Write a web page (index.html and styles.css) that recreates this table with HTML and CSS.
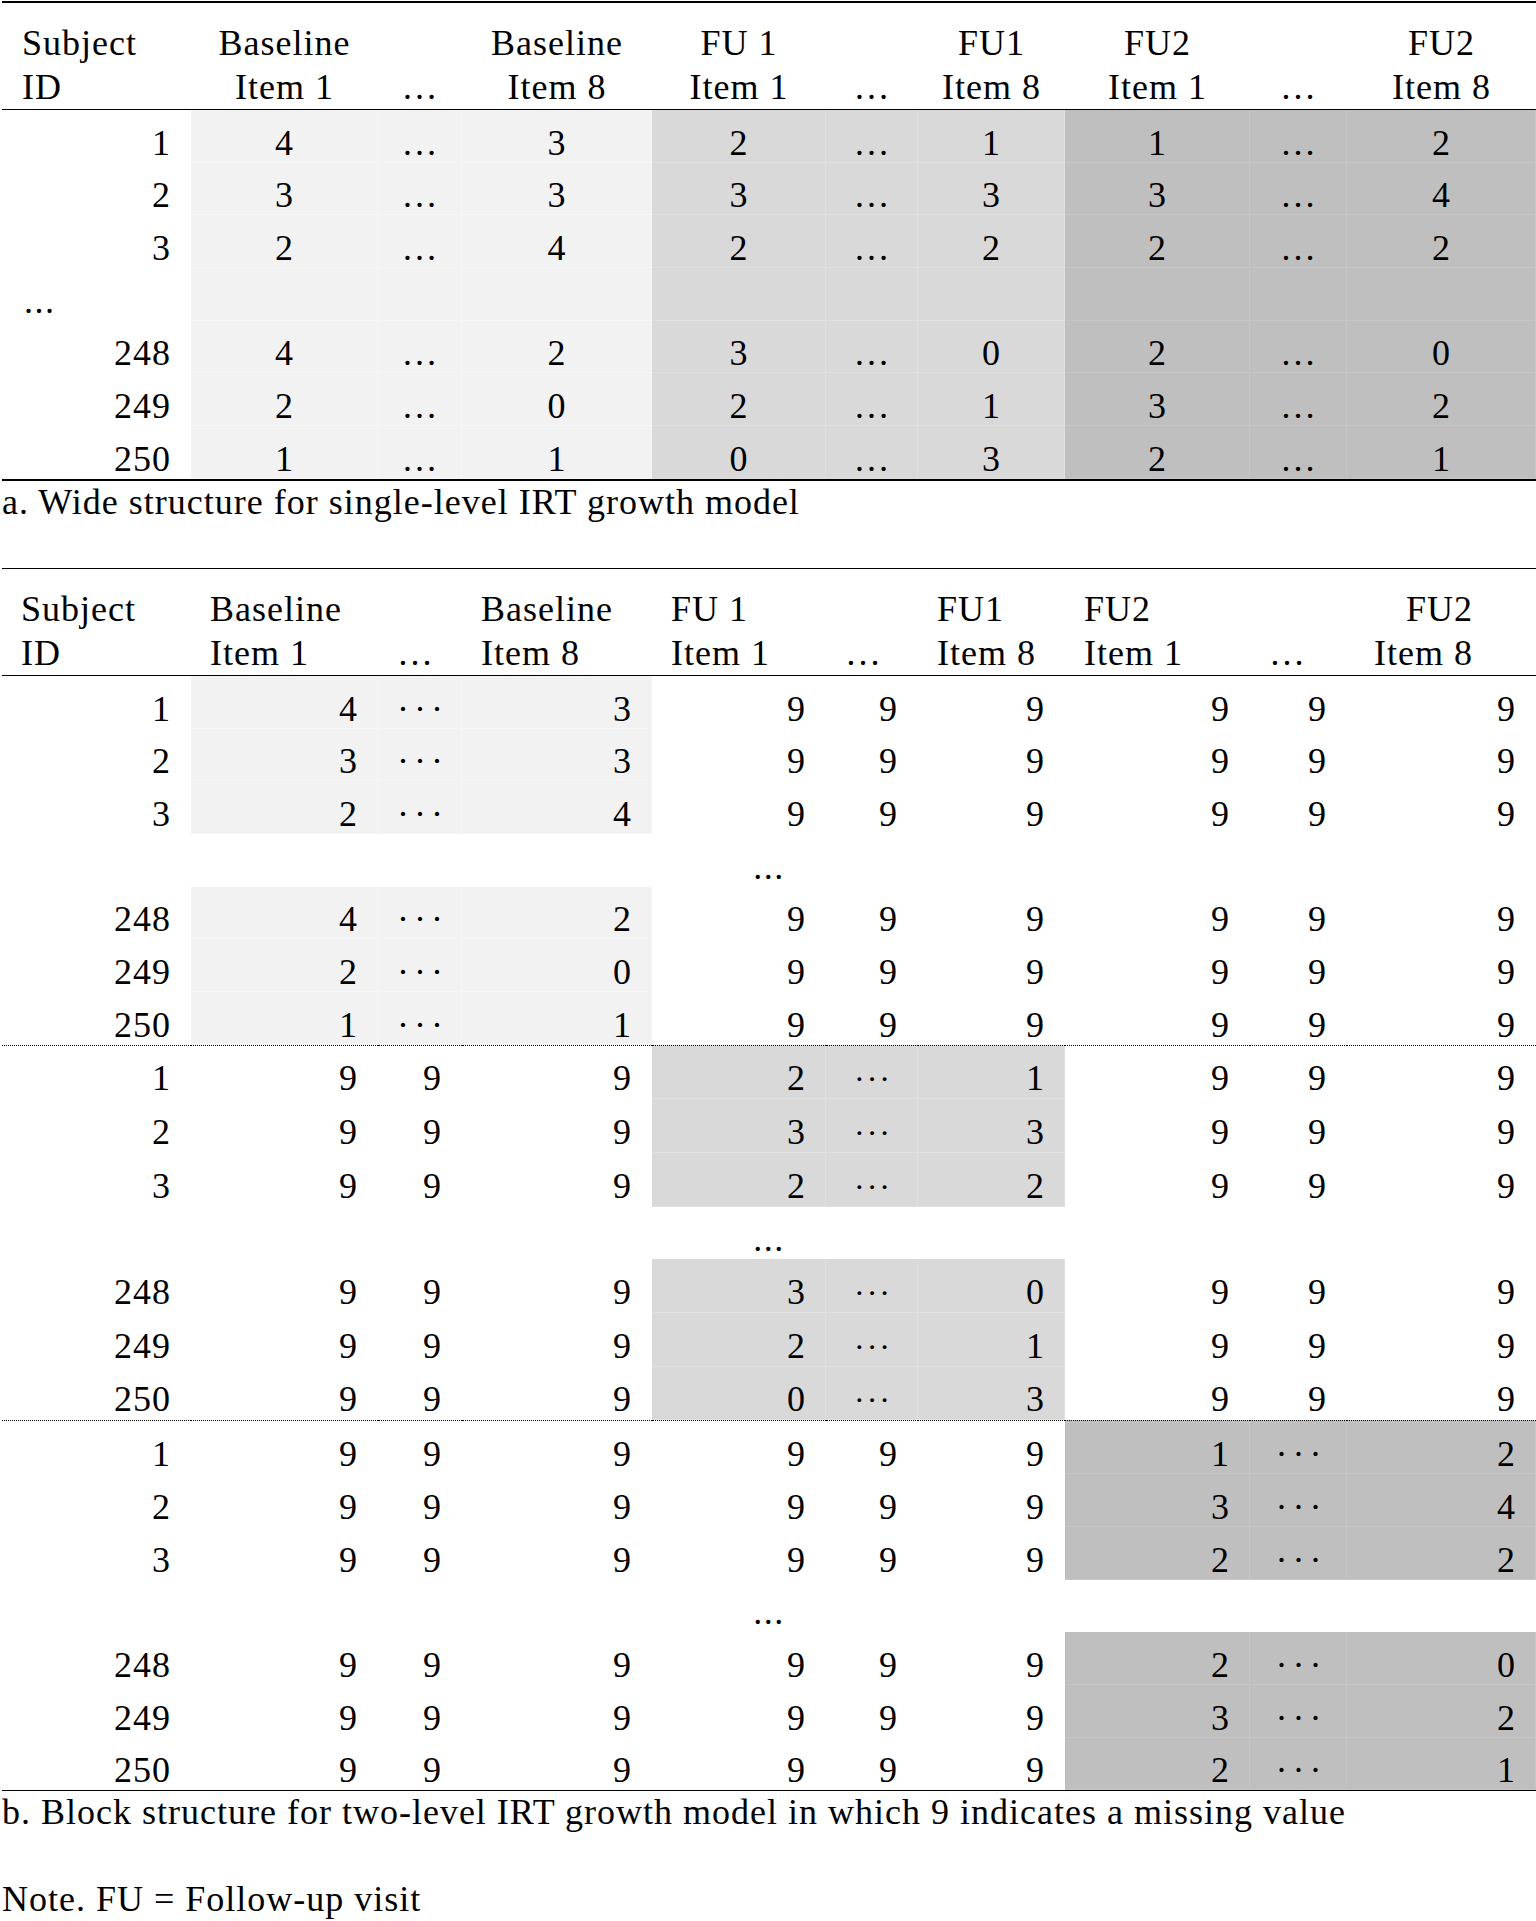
FILE: index.html
```html
<!DOCTYPE html>
<html lang="en">
<head>
<meta charset="utf-8">
<title>Wide and block data structures</title>
<link rel="stylesheet" href="styles.css">
</head>
<body>
<main class="page">
  <table class="grid wide">
    <colgroup>
      <col class="c1"><col class="c2"><col class="c3"><col class="c4"><col class="c5">
      <col class="c6"><col class="c7"><col class="c8"><col class="c9"><col class="c10">
    </colgroup>
    <thead>
      <tr>
        <th class="left">Subject<br>ID</th>
        <th>Baseline<br>Item 1</th>
        <th>…</th>
        <th>Baseline<br>Item 8</th>
        <th>FU 1<br>Item 1</th>
        <th>…</th>
        <th>FU1<br>Item 8</th>
        <th>FU2<br>Item 1</th>
        <th>…</th>
        <th>FU2<br>Item 8</th>
      </tr>
    </thead>
    <tbody>
      <tr><td class="id">1</td><td class="s1">4</td><td class="s1">…</td><td class="s1">3</td><td class="s2">2</td><td class="s2">…</td><td class="s2">1</td><td class="s3">1</td><td class="s3">…</td><td class="s3">2</td></tr>
      <tr><td class="id">2</td><td class="s1">3</td><td class="s1">…</td><td class="s1">3</td><td class="s2">3</td><td class="s2">…</td><td class="s2">3</td><td class="s3">3</td><td class="s3">…</td><td class="s3">4</td></tr>
      <tr><td class="id">3</td><td class="s1">2</td><td class="s1">…</td><td class="s1">4</td><td class="s2">2</td><td class="s2">…</td><td class="s2">2</td><td class="s3">2</td><td class="s3">…</td><td class="s3">2</td></tr>
      <tr><td class="skip">...</td><td class="s1"></td><td class="s1"></td><td class="s1"></td><td class="s2"></td><td class="s2"></td><td class="s2"></td><td class="s3"></td><td class="s3"></td><td class="s3"></td></tr>
      <tr><td class="id">248</td><td class="s1">4</td><td class="s1">…</td><td class="s1">2</td><td class="s2">3</td><td class="s2">…</td><td class="s2">0</td><td class="s3">2</td><td class="s3">…</td><td class="s3">0</td></tr>
      <tr><td class="id">249</td><td class="s1">2</td><td class="s1">…</td><td class="s1">0</td><td class="s2">2</td><td class="s2">…</td><td class="s2">1</td><td class="s3">3</td><td class="s3">…</td><td class="s3">2</td></tr>
      <tr class="last"><td class="id">250</td><td class="s1">1</td><td class="s1">…</td><td class="s1">1</td><td class="s2">0</td><td class="s2">…</td><td class="s2">3</td><td class="s3">2</td><td class="s3">…</td><td class="s3">1</td></tr>
    </tbody>
  </table>
  <p class="caption first">a. Wide structure for single-level IRT growth model</p>

  <table class="grid block">
    <colgroup>
      <col class="c1"><col class="c2"><col class="c3"><col class="c4"><col class="c5">
      <col class="c6"><col class="c7"><col class="c8"><col class="c9"><col class="c10">
    </colgroup>
    <thead>
      <tr>
        <th>Subject<br>ID</th>
        <th>Baseline<br>Item 1</th>
        <th>…</th>
        <th>Baseline<br>Item 8</th>
        <th>FU 1<br>Item 1</th>
        <th>…</th>
        <th>FU1<br>Item 8</th>
        <th>FU2<br>Item 1</th>
        <th>…</th>
        <th class="end">FU2<br>Item 8</th>
      </tr>
    </thead>
    <tbody>
      <tr><td>1</td><td class="s1">4</td><td class="s1 mid"><span class="md">···</span></td><td class="s1">3</td><td>9</td><td>9</td><td>9</td><td>9</td><td>9</td><td>9</td></tr>
      <tr><td>2</td><td class="s1">3</td><td class="s1 mid"><span class="md">···</span></td><td class="s1">3</td><td>9</td><td>9</td><td>9</td><td>9</td><td>9</td><td>9</td></tr>
      <tr><td>3</td><td class="s1">2</td><td class="s1 mid"><span class="md">···</span></td><td class="s1">4</td><td>9</td><td>9</td><td>9</td><td>9</td><td>9</td><td>9</td></tr>
      <tr><td colspan="10" class="gap">...</td></tr>
      <tr><td>248</td><td class="s1">4</td><td class="s1 mid"><span class="md">···</span></td><td class="s1">2</td><td>9</td><td>9</td><td>9</td><td>9</td><td>9</td><td>9</td></tr>
      <tr><td>249</td><td class="s1">2</td><td class="s1 mid"><span class="md">···</span></td><td class="s1">0</td><td>9</td><td>9</td><td>9</td><td>9</td><td>9</td><td>9</td></tr>
      <tr><td>250</td><td class="s1">1</td><td class="s1 mid"><span class="md">···</span></td><td class="s1">1</td><td>9</td><td>9</td><td>9</td><td>9</td><td>9</td><td>9</td></tr>

      <tr class="split"><td>1</td><td>9</td><td>9</td><td>9</td><td class="s2">2</td><td class="s2 mid"><span class="md sm">···</span></td><td class="s2">1</td><td>9</td><td>9</td><td>9</td></tr>
      <tr><td>2</td><td>9</td><td>9</td><td>9</td><td class="s2">3</td><td class="s2 mid"><span class="md sm">···</span></td><td class="s2">3</td><td>9</td><td>9</td><td>9</td></tr>
      <tr><td>3</td><td>9</td><td>9</td><td>9</td><td class="s2">2</td><td class="s2 mid"><span class="md sm">···</span></td><td class="s2">2</td><td>9</td><td>9</td><td>9</td></tr>
      <tr><td colspan="10" class="gap">...</td></tr>
      <tr><td>248</td><td>9</td><td>9</td><td>9</td><td class="s2">3</td><td class="s2 mid"><span class="md sm">···</span></td><td class="s2">0</td><td>9</td><td>9</td><td>9</td></tr>
      <tr><td>249</td><td>9</td><td>9</td><td>9</td><td class="s2">2</td><td class="s2 mid"><span class="md sm">···</span></td><td class="s2">1</td><td>9</td><td>9</td><td>9</td></tr>
      <tr><td>250</td><td>9</td><td>9</td><td>9</td><td class="s2">0</td><td class="s2 mid"><span class="md sm">···</span></td><td class="s2">3</td><td>9</td><td>9</td><td>9</td></tr>

      <tr class="split"><td>1</td><td>9</td><td>9</td><td>9</td><td>9</td><td>9</td><td>9</td><td class="s3">1</td><td class="s3 mid"><span class="md">···</span></td><td class="s3">2</td></tr>
      <tr><td>2</td><td>9</td><td>9</td><td>9</td><td>9</td><td>9</td><td>9</td><td class="s3">3</td><td class="s3 mid"><span class="md">···</span></td><td class="s3">4</td></tr>
      <tr><td>3</td><td>9</td><td>9</td><td>9</td><td>9</td><td>9</td><td>9</td><td class="s3">2</td><td class="s3 mid"><span class="md">···</span></td><td class="s3">2</td></tr>
      <tr><td colspan="10" class="gap">...</td></tr>
      <tr><td>248</td><td>9</td><td>9</td><td>9</td><td>9</td><td>9</td><td>9</td><td class="s3">2</td><td class="s3 mid"><span class="md">···</span></td><td class="s3">0</td></tr>
      <tr><td>249</td><td>9</td><td>9</td><td>9</td><td>9</td><td>9</td><td>9</td><td class="s3">3</td><td class="s3 mid"><span class="md">···</span></td><td class="s3">2</td></tr>
      <tr class="last"><td>250</td><td>9</td><td>9</td><td>9</td><td>9</td><td>9</td><td>9</td><td class="s3">2</td><td class="s3 mid"><span class="md">···</span></td><td class="s3">1</td></tr>
    </tbody>
  </table>
  <p class="caption">b. Block structure for two-level IRT growth model in which 9 indicates a missing value</p>
  <p class="caption note">Note. FU = Follow-up visit</p>
</main>
</body>
</html>
```

FILE: styles.css
```css
html, body {
  margin: 0;
  padding: 0;
  background: #ffffff;
}

body {
  font-family: "Liberation Serif", "Times New Roman", serif;
  font-size: 36px;
  letter-spacing: 1px;
  color: #000000;
}

.page {
  width: 1536px;
  padding-top: 1px;
}

.grid {
  width: 1534px;
  margin-left: 2px;
  border-collapse: separate;
  border-spacing: 0;
  table-layout: fixed;
}

.c1 { width: 189px; }
.c2 { width: 187px; }
.c3 { width: 84px; }
.c4 { width: 190px; }
.c5 { width: 174px; }
.c6 { width: 92px; }
.c7 { width: 147px; }
.c8 { width: 185px; }
.c9 { width: 97px; }
.c10 { width: 189px; }

.grid th {
  font-weight: normal;
  vertical-align: bottom;
  line-height: 44px;
  padding: 18px 0 0 0;
  white-space: nowrap;
  border-bottom: 1.5px solid #000;
}

.wide th {
  border-top: 2px solid #000;
  text-align: center;
}

.wide th.left {
  text-align: left;
  padding-left: 20px;
}

.block th {
  border-top: 1.5px solid #000;
  text-align: left;
  padding-left: 19px;
}

.block th.end {
  text-align: right;
  padding-left: 0;
  padding-right: 63px;
}

.grid tr {
  height: 52.7px;
}

.grid td {
  vertical-align: top;
  line-height: 40px;
  padding: 12.7px 0 0 0;
  white-space: nowrap;
}

.wide td {
  text-align: center;
}

.wide td.id {
  text-align: right;
  padding-right: 20px;
}

.wide td.skip {
  text-align: left;
  padding-left: 22px;
  letter-spacing: 1.5px;
}

.block td {
  text-align: right;
  padding-right: 20px;
}

.block td.mid {
  text-align: center;
  padding-right: 0;
}

.block td.gap {
  text-align: center;
  padding-right: 0;
  letter-spacing: 1.5px;
}

.md {
  letter-spacing: 5px;
  margin-right: -5px;
}

.md.sm {
  font-size: 32px;
  letter-spacing: 2px;
  margin-right: -2px;
}

.s1 { background: #f2f2f2; box-shadow: inset -1px -1px 0 rgba(255, 255, 255, 0.35); }
.s2 { background: #d9d9d9; box-shadow: inset -1px -1px 0 rgba(255, 255, 255, 0.18); }
.s3 { background: #bfbfbf; box-shadow: inset -1px -1px 0 rgba(255, 255, 255, 0.12); }

.wide tr.last td {
  border-bottom: 2px solid #000;
}

.block tr.last td {
  border-bottom: 1.5px solid #000;
}

.block tr.split td {
  border-top: 1px dotted #000;
}

.caption {
  margin: 0 0 0 2px;
  line-height: 43.5px;
}

.caption.first {
  margin-bottom: 43.5px;
}

.caption.note {
  margin-top: 43.5px;
}
```
